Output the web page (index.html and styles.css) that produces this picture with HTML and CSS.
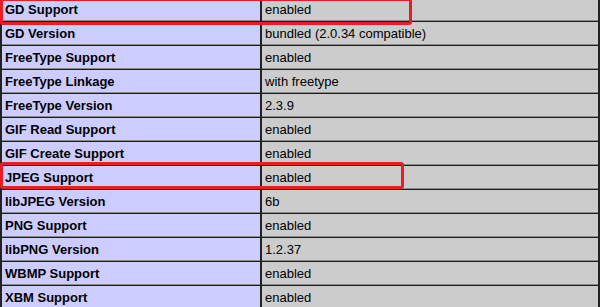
FILE: index.html
```html
<!DOCTYPE html>
<html lang="en">
<head>
    <meta charset="UTF-8">
    <title>gd</title>
    <link rel="stylesheet" href="styles.css">
</head>
<body>
    <div class="info">
        <table class="gd">
            <tr><td class="e">GD Support</td><td class="v">enabled</td></tr>
            <tr><td class="e">GD Version</td><td class="v">bundled (2.0.34 compatible)</td></tr>
            <tr><td class="e">FreeType Support</td><td class="v">enabled</td></tr>
            <tr><td class="e">FreeType Linkage</td><td class="v">with freetype</td></tr>
            <tr><td class="e">FreeType Version</td><td class="v">2.3.9</td></tr>
            <tr><td class="e">GIF Read Support</td><td class="v">enabled</td></tr>
            <tr><td class="e">GIF Create Support</td><td class="v">enabled</td></tr>
            <tr><td class="e">JPEG Support</td><td class="v">enabled</td></tr>
            <tr><td class="e">libJPEG Version</td><td class="v">6b</td></tr>
            <tr><td class="e">PNG Support</td><td class="v">enabled</td></tr>
            <tr><td class="e">libPNG Version</td><td class="v">1.2.37</td></tr>
            <tr><td class="e">WBMP Support</td><td class="v">enabled</td></tr>
            <tr><td class="e">XBM Support</td><td class="v">enabled</td></tr>
        </table>
        <!-- highlight boxes -->
        <div class="mark mark-gd"></div>
        <div class="mark mark-jpeg"></div>
    </div>
</body>
</html>
```

FILE: styles.css
```css
body {
    margin: 0;
    background: #ffffff;
    font-family: "Liberation Sans", Arial, sans-serif;
}

.info {
    position: relative;
    width: 600px;
}

.gd {
    width: 600px;
    margin-top: -2px;
    border-collapse: collapse;
    border-left: 2px solid #222;
    border-right: 2px solid #222;
}

.gd td {
    height: 23px;
    padding: 0 3px;
    font-size: 13px;
    color: #000;
    border-bottom: 1px solid #1c1c1c;
    box-shadow: inset 0 -1px 0 #8c8c8c;
    vertical-align: middle;
}

.e {
    width: 252px;
    background-color: #ccccff;
    font-weight: bold;
    border-right: 2px solid #222;
}

.v {
    background-color: #cccccc;
}

.mark {
    position: absolute;
    left: 0;
    border: 3px solid #ec1c24;
    border-radius: 3px;
    box-sizing: border-box;
    height: 27px;
}

.mark-gd {
    top: 0;
    width: 412px;
}

.mark-jpeg {
    top: 164px;
    width: 404px;
}
```
